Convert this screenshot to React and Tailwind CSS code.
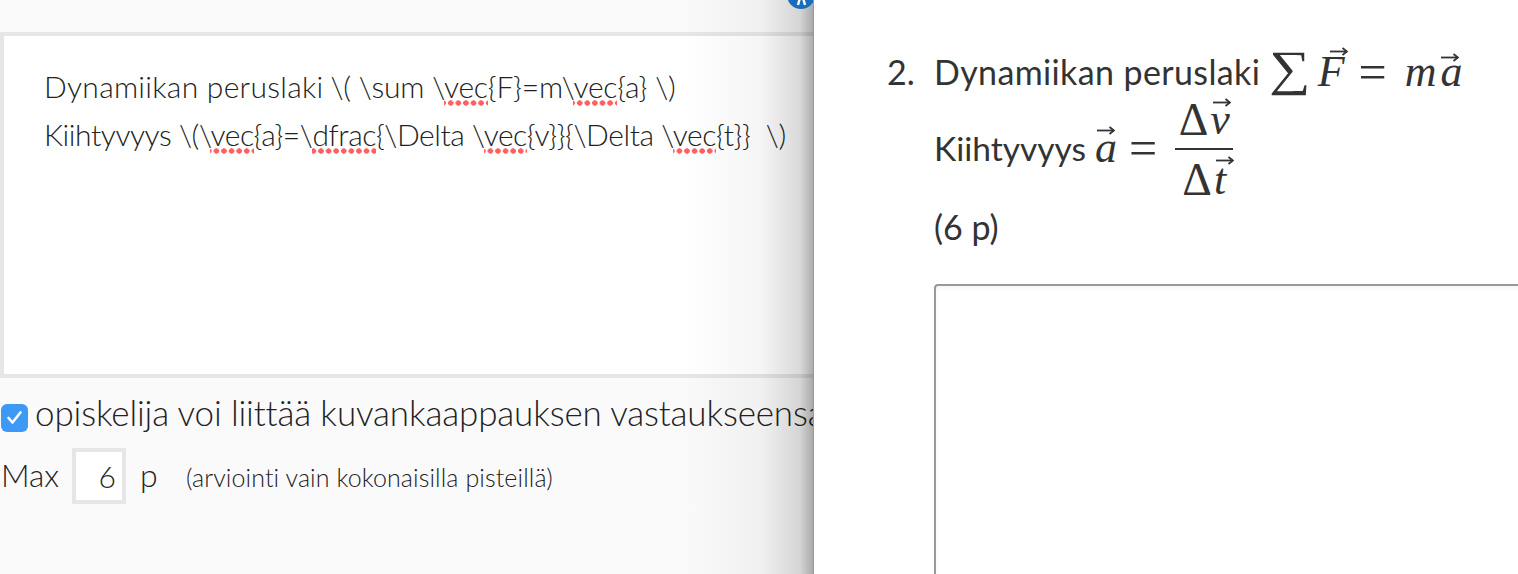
const sans = "font-['Lato','Noto_Sans',sans-serif]";
const serif = "font-['Liberation_Serif',serif]";

function Sp({ children }) {
  return <span className="pb-[2px] bg-[radial-gradient(circle,#ff5f5f_2.4px,transparent_3px)] bg-[length:7.6px_6px] bg-repeat-x bg-bottom">{children}</span>;
}

function Arrow({ className }) {
  return (
    <svg className={className} width="18" height="9" viewBox="0 0 18 9" fill="none" stroke="#333" strokeWidth="1.8">
      <path d="M0 4.5H17" />
      <path d="M12.5 1L17 4.5L12.5 8" />
    </svg>
  );
}

function V({ children, arrow }) {
  return (
    <span className="relative inline-block italic font-['Liberation_Serif',serif]">
      <Arrow className={arrow} />
      {children}
    </span>
  );
}

function Frac() {
  return (
    <span className="inline-flex flex-col items-center w-[58px] ml-[18px] font-['Liberation_Serif',serif] text-[44px] leading-[50px]">
      <span className="flex items-end h-[57px] pb-[3px] gap-[2px]">
        <span className="text-[46px]">Δ</span>
        <V arrow="absolute left-[3px] top-[3px]">v</V>
      </span>
      <span className="w-full h-[2px] bg-[#333]" />
      <span className="flex items-end h-[55px] gap-[2px]">
        <span className="text-[46px]">Δ</span>
        <V arrow="absolute left-[2px] top-[1px]">t</V>
      </span>
    </span>
  );
}

export default function App() {
  return (
    <div className={`${sans} flex h-[574px] w-[1518px] overflow-hidden bg-white text-[#333]`}>
      <div className="relative w-[813px] h-full shrink-0 overflow-hidden bg-[#fafafa] pt-[32px] font-light text-[#222]">
        <div className="h-[346px] w-[830px] border-4 border-[#e6e6e6] bg-white pt-[26px] pl-[40px] text-[30px] leading-[48px] whitespace-pre">
          <div>
            <span className="tracking-[0.28px]">Dynamiikan peruslaki</span>
            <span className="tracking-[-0.22px] ml-[-1px]"> \( \sum \<Sp>vec</Sp>{"{F}=m\\"}<Sp>vec</Sp>{"{a} \\)"}</span>
          </div>
          <div className="tracking-[-0.44px]">Kiihtyvyys \(\<Sp>vec</Sp>{"{a}=\\"}<Sp>dfrac</Sp>{"{\\Delta \\"}<Sp>vec</Sp>{"{v}}{\\Delta \\"}<Sp>vec</Sp>{"{t}}  \\)"}</div>
        </div>
        <div className="flex items-center gap-[7px] mt-[20px] pl-[1px] h-[40px] text-[35px] tracking-[-0.15px] whitespace-nowrap">
          <span className="flex items-center justify-center w-[27px] h-[28px] mb-[1px] shrink-0 rounded-[6px] bg-[#3d99f5]">
            <svg width="17" height="15" viewBox="0 0 17 15" fill="none" stroke="#fff" strokeWidth="2.6" strokeLinecap="round" strokeLinejoin="round">
              <path d="M2.5 8L6.5 12.5L14.5 2.5" />
            </svg>
          </span>
          <span className="mb-[12px]">opiskelija voi liittää kuvankaappauksen vastaukseensa</span>
        </div>
        <div className="flex items-center mt-[10px] h-[56px] whitespace-nowrap">
          <span className="text-[31.5px] pl-[1px] w-[72px]">Max</span>
          <span className="flex items-center justify-end w-[54px] h-[56px] border-4 border-[#e6e6e6] bg-white pr-[6px] text-[30px]">6</span>
          <span className="text-[32px] ml-[14px] w-[46px] mb-[2px]">p</span>
          <span className="text-[25px] tracking-[0.1px] mt-[4px]">(arviointi vain kokonaisilla pisteillä)</span>
        </div>
        <div className="absolute inset-y-0 right-0 w-[130px] bg-[linear-gradient(90deg,rgba(0,0,0,0)_0%,rgba(0,0,0,.04)_60%,rgba(0,0,0,.15)_90%,rgba(0,0,0,.32)_100%)]" />
        <div className="absolute top-[-19px] right-[-2px] w-[28px] h-[28px] rounded-full bg-[#1a6dbb]">
          <svg width="28" height="28" viewBox="0 0 28 28" fill="none" stroke="#fff" strokeWidth="2.4">
            <path d="M12.5 18.5L11 24" />
            <path d="M16.5 18.5L18 24" />
          </svg>
        </div>
      </div>
      <div className="flex-1 min-w-0 border-l border-[#999] pt-[44px] pl-[73px] text-[#333] text-[34px] leading-[56px] font-normal">
        <div className="flex">
          <span className="w-[47px] shrink-0">2.</span>
          <div className="min-w-0 flex-1">
            <div className="h-[56px] whitespace-nowrap flex items-center">
              <span className="tracking-[0.38px]">Dynamiikan peruslaki</span>
              <span className={`ml-[9px] mb-[6px] ${serif} text-[58px] scale-y-[.85]`}>∑</span>
              <span className={`ml-[7px] ${serif} text-[44px]`}><V arrow="absolute left-[12px] top-[3px]">F</V></span>
              <span className={`ml-[14px] ${serif} text-[50px]`}>=</span>
              <span className={`ml-[18px] ${serif} text-[44px]`}><V arrow="hidden">m</V></span>
              <span className={`ml-[4px] ${serif} text-[44px]`}><V arrow="absolute left-[0px] top-[9px]">a</V></span>
            </div>
            <div className="flex items-center h-[100px] whitespace-nowrap mt-[-2px]">
              <span className="text-[33.5px]">Kiihtyvyys</span>
              <span className={`ml-[9px] ${serif} text-[44px]`}><V arrow="absolute left-[2px] top-[6px]">a</V></span>
              <span className={`ml-[12px] ${serif} text-[50px]`}>=</span>
              <Frac />
            </div>
            <div className="mt-[1px]">(6 p)</div>
            <div className="mt-[29px] h-[400px] w-[700px] rounded-[4px] border-2 border-[#999] bg-white shadow-[inset_0_2px_4px_rgba(0,0,0,.05)]" />
          </div>
        </div>
      </div>
    </div>
  );
}
